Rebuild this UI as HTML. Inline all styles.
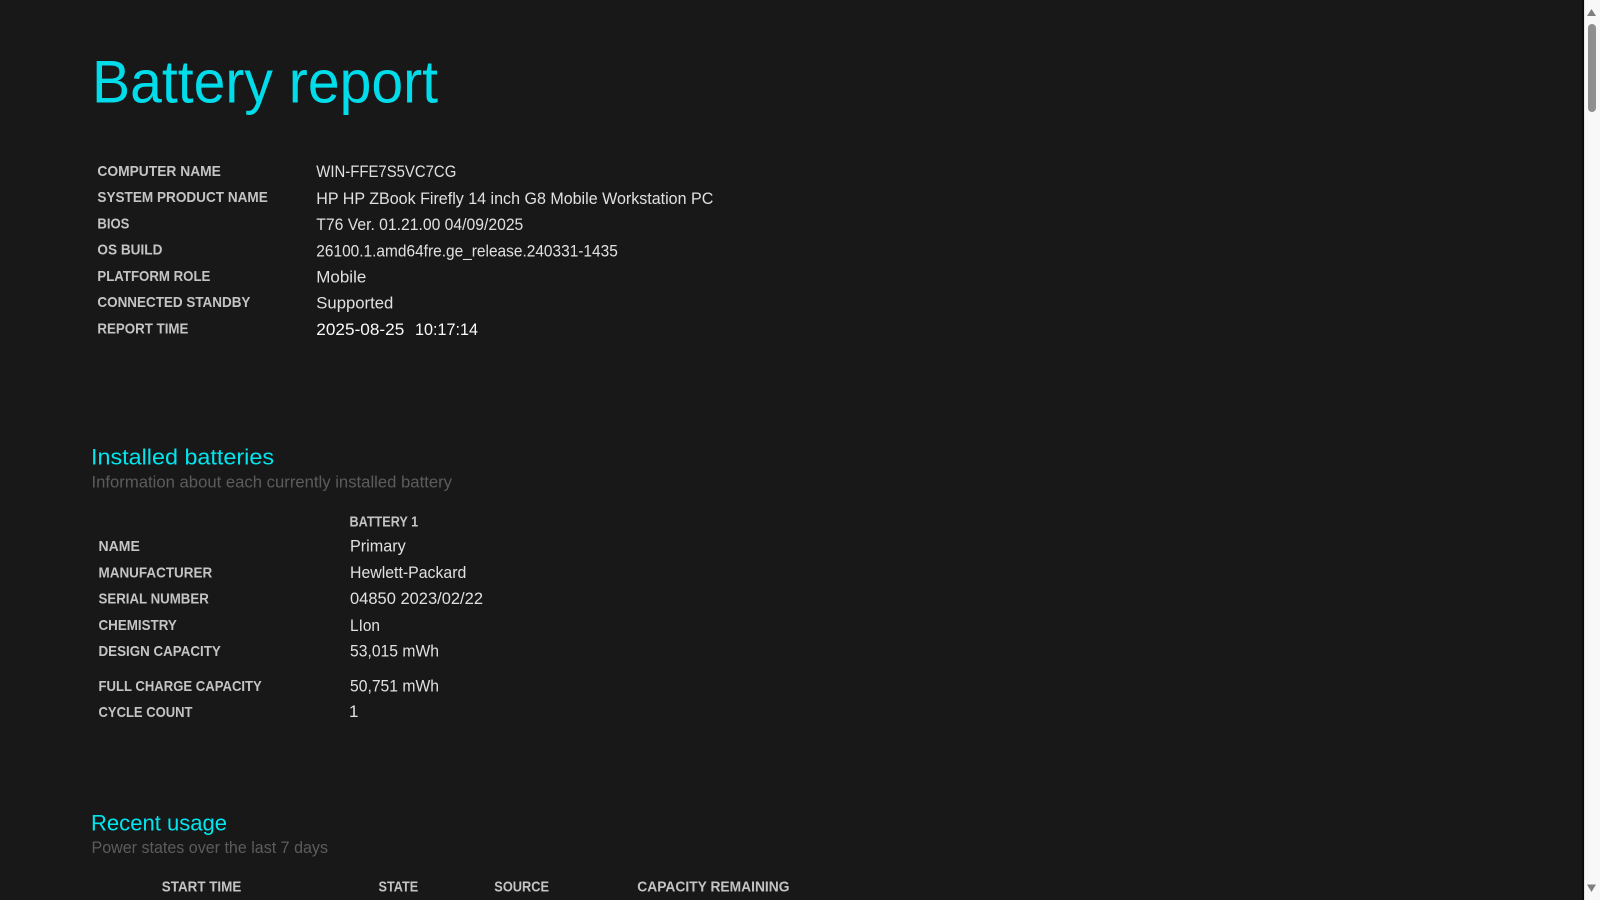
<!DOCTYPE html>
<html lang="en">
<head>
<meta charset="utf-8">
<title>Battery report</title>
<style>
html,body{margin:0;padding:0;width:1600px;height:900px;overflow:hidden;background:#181818}
svg{display:block;position:absolute;left:0;top:0}
text{font-family:"Liberation Sans",Arial,sans-serif;white-space:pre}
.l{font-size:15px;font-weight:bold;fill:#c4c4c4}
.v{font-size:17px;fill:#e0e0e0}
.h{font-size:22px;fill:#00e5ee}
.s{font-size:16.5px;fill:#5c5c5c}
</style>
</head>
<body>
<svg width="1600" height="900" viewBox="0 0 1600 900" xmlns="http://www.w3.org/2000/svg">
<rect width="1600" height="900" fill="#181818"/>
<text x="92" y="102.5" font-size="60" fill="#00dcea" textLength="346" lengthAdjust="spacingAndGlyphs">Battery report</text>

<text class="l" x="97.4" y="176" textLength="123.5" lengthAdjust="spacingAndGlyphs">COMPUTER NAME</text>
<text class="l" x="97.4" y="202" textLength="170.4" lengthAdjust="spacingAndGlyphs">SYSTEM PRODUCT NAME</text>
<text class="l" x="97.4" y="228.3" textLength="32" lengthAdjust="spacingAndGlyphs">BIOS</text>
<text class="l" x="97.4" y="254.3" textLength="65" lengthAdjust="spacingAndGlyphs">OS BUILD</text>
<text class="l" x="97.4" y="280.8" textLength="113" lengthAdjust="spacingAndGlyphs">PLATFORM ROLE</text>
<text class="l" x="97.4" y="307" textLength="153" lengthAdjust="spacingAndGlyphs">CONNECTED STANDBY</text>
<text class="l" x="97.4" y="333.3" textLength="91" lengthAdjust="spacingAndGlyphs">REPORT TIME</text>

<text class="v" x="316.3" y="177.2" textLength="140" lengthAdjust="spacingAndGlyphs">WIN-FFE7S5VC7CG</text>
<text class="v" x="316.3" y="203.8" textLength="397" lengthAdjust="spacingAndGlyphs">HP HP ZBook Firefly 14 inch G8 Mobile Workstation PC</text>
<text class="v" x="316.3" y="229.8" textLength="207" lengthAdjust="spacingAndGlyphs">T76 Ver. 01.21.00 04/09/2025</text>
<text class="v" x="316.3" y="256.3" textLength="301.5" lengthAdjust="spacingAndGlyphs">26100.1.amd64fre.ge_release.240331-1435</text>
<text class="v" x="316.3" y="282.7" textLength="50" lengthAdjust="spacingAndGlyphs">Mobile</text>
<text class="v" x="316.3" y="308.7" textLength="77" lengthAdjust="spacingAndGlyphs">Supported</text>
<text class="v" x="316.3" y="335" style="fill:#fafafa" textLength="88" lengthAdjust="spacingAndGlyphs">2025-08-25</text>
<text class="v" x="415" y="335" style="fill:#fafafa" textLength="63" lengthAdjust="spacingAndGlyphs">10:17:14</text>

<text class="h" x="91" y="464.7" textLength="183" lengthAdjust="spacingAndGlyphs">Installed batteries</text>
<text class="s" x="91.5" y="487.5" textLength="360.5" lengthAdjust="spacingAndGlyphs">Information about each currently installed battery</text>

<text class="l" x="349.5" y="526.5" textLength="68.6" lengthAdjust="spacingAndGlyphs">BATTERY 1</text>
<text class="l" x="98.5" y="551" textLength="41.3" lengthAdjust="spacingAndGlyphs">NAME</text>
<text class="l" x="98.5" y="577.4" textLength="113.7" lengthAdjust="spacingAndGlyphs">MANUFACTURER</text>
<text class="l" x="98.5" y="603.4" textLength="110.3" lengthAdjust="spacingAndGlyphs">SERIAL NUMBER</text>
<text class="l" x="98.5" y="630.1" textLength="78.3" lengthAdjust="spacingAndGlyphs">CHEMISTRY</text>
<text class="l" x="98.5" y="656.1" textLength="122.3" lengthAdjust="spacingAndGlyphs">DESIGN CAPACITY</text>
<text class="l" x="98.5" y="690.8" textLength="163.3" lengthAdjust="spacingAndGlyphs">FULL CHARGE CAPACITY</text>
<text class="l" x="98.5" y="716.8" textLength="94" lengthAdjust="spacingAndGlyphs">CYCLE COUNT</text>

<text class="v" x="350" y="551.7" textLength="55.7" lengthAdjust="spacingAndGlyphs">Primary</text>
<text class="v" x="350" y="578" textLength="116.3" lengthAdjust="spacingAndGlyphs">Hewlett-Packard</text>
<text class="v" x="350" y="604" textLength="133" lengthAdjust="spacingAndGlyphs">04850 2023/02/22</text>
<text class="v" x="350" y="631" textLength="30" lengthAdjust="spacingAndGlyphs">LIon</text>
<text class="v" x="350" y="656.5" textLength="89" lengthAdjust="spacingAndGlyphs">53,015 mWh</text>
<text class="v" x="350" y="691.5" textLength="89" lengthAdjust="spacingAndGlyphs">50,751 mWh</text>
<text class="v" x="349" y="717">1</text>

<text class="h" x="91" y="830.7" textLength="136" lengthAdjust="spacingAndGlyphs">Recent usage</text>
<text class="s" x="91.5" y="853" textLength="236.5" lengthAdjust="spacingAndGlyphs">Power states over the last 7 days</text>

<text class="l" x="161.8" y="891.6" textLength="79.5" lengthAdjust="spacingAndGlyphs">START TIME</text>
<text class="l" x="378.5" y="891.6" textLength="39.7" lengthAdjust="spacingAndGlyphs">STATE</text>
<text class="l" x="494.3" y="891.6" textLength="54.8" lengthAdjust="spacingAndGlyphs">SOURCE</text>
<text class="l" x="637.3" y="891.6" textLength="152.2" lengthAdjust="spacingAndGlyphs">CAPACITY REMAINING</text>

<rect x="1582" y="0" width="2" height="900" fill="#0a0a0a"/>
<rect x="1584" y="0" width="16" height="900" fill="#f8f8f8"/>
<rect x="1584" y="0" width="1" height="900" fill="#e4e4e4"/>
<rect x="1588" y="24" width="8" height="88" rx="4" fill="#8f8f8f"/>
<path d="M1591.5 9 L1596 16 L1587 16 Z" fill="#7f7f7f"/>
<path d="M1587 884.5 L1596 884.5 L1591.5 892 Z" fill="#7f7f7f"/>
</svg>
</body>
</html>
